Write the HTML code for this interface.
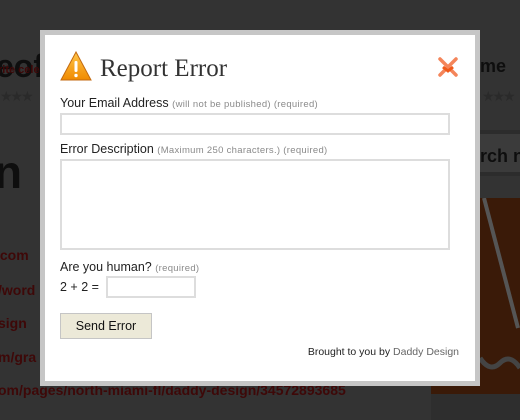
<!DOCTYPE html>
<html><head><meta charset="utf-8"><style>
*{margin:0;padding:0;box-sizing:border-box}
body{width:520px;height:420px;background:#333;position:relative;overflow:hidden;font-family:"Liberation Sans",Arial,sans-serif}
.bg{position:absolute;font-weight:bold;color:#0e0e0e;white-space:nowrap}
.red{color:#3e0808;font-size:14px;font-weight:bold;position:absolute;white-space:nowrap}
#modal{position:absolute;left:40px;top:30px;width:440px;height:356px;background:#c6c6c6;}
#inner{position:absolute;left:5px;top:5px;width:430px;height:346px;background:#fff}
.lbl{position:absolute;left:15px;font-size:12.5px;color:#222}
.lbl small{font-size:9.5px;color:#8a8a8a;letter-spacing:.3px}
.inp{position:absolute;border:2px solid #ddd;background:#fff}
</style></head><body>
<div class="bg" style="left:-4px;top:48px;font-size:32px">eof</div>
<div class="red" style="left:-2px;top:64px;font-size:11px">rite cele</div>
<div style="position:absolute;left:0;top:88px;width:40px;height:12px;color:#2a2a2a;font-size:14px;letter-spacing:-2px">★★★</div>
<div class="bg" style="left:-6px;top:145px;font-size:46px">n</div>
<div class="red" style="left:-4px;top:247px">.com</div>
<div class="red" style="left:-2px;top:282px">/word</div>
<div class="red" style="left:-2px;top:315px">sign</div>
<div class="red" style="left:-2px;top:349px">m/gra</div>
<div class="red" style="left:-2px;top:382px">om/pages/north-miami-fl/daddy-design/34572893685</div>
<div class="bg" style="left:480px;top:56px;font-size:18px">me</div>
<div style="position:absolute;left:482px;top:88px;color:#2a2a2a;font-size:14px;letter-spacing:-2px">★★★</div>
<div style="position:absolute;left:478px;top:130px;width:42px;height:46px;background:#3b3b3b;border-top:4px solid #2c2c2c;border-bottom:4px solid #2c2c2c"></div>
<div class="bg" style="left:480px;top:146px;font-size:18px">rch n</div>
<div style="position:absolute;left:431px;top:198px;width:89px;height:196px;background:#3a1a08"></div>
<svg style="position:absolute;left:480px;top:198px" width="40" height="196"><path d="M4 0 L38 130" stroke="#555" stroke-width="4" fill="none"/><path d="M0 160 Q10 175 20 165 Q30 155 40 170" stroke="#444" stroke-width="5" fill="none"/></svg>
<div style="position:absolute;left:431px;top:394px;width:89px;height:26px;background:#2e2e2e"></div>
<div id="modal"><div id="inner">
<svg style="position:absolute;left:15px;top:16px" width="32" height="30" viewBox="0 0 32 30"><defs><linearGradient id="g" x1="0" y1="0" x2="0" y2="1"><stop offset="0" stop-color="#ffc64a"/><stop offset="1" stop-color="#f08a00"/></linearGradient></defs><path d="M16 1 L31 29 L1 29 Z" fill="url(#g)" stroke="#c36a10" stroke-width="1"/><rect x="14.5" y="10" width="3" height="11" rx="1.2" fill="#fff"/><circle cx="16" cy="24.5" r="1.7" fill="#fff"/></svg>
<div style="position:absolute;left:55px;top:20px;font-family:'Liberation Serif',serif;font-size:25px;color:#333">Report Error</div>
<svg style="position:absolute;left:392px;top:22px" width="22" height="20" viewBox="0 0 22 20"><path d="M3 2 L19 18 M19 2 L3 18" stroke="#f4855a" stroke-width="3.5" stroke-linecap="round"/><path d="M6 10 L11 14 L16 10" stroke="#f05a1a" stroke-width="3" fill="none"/></svg>
<div class="lbl" style="top:61px">Your Email Address <small>(will not be published) (required)</small></div>
<div class="inp" style="left:15px;top:78px;width:390px;height:22px"></div>
<div class="lbl" style="top:107px">Error Description <small>(Maximum 250 characters.) (required)</small></div>
<div class="inp" style="left:15px;top:124px;width:390px;height:91px"></div>
<div class="lbl" style="top:225px">Are you human? <small>(required)</small></div>
<div class="lbl" style="top:245px">2 + 2 =</div>
<div class="inp" style="left:61px;top:241px;width:90px;height:22px"></div>
<div style="position:absolute;left:15px;top:278px;width:92px;height:26px;background:#ece9d8;border:1px solid #c5c5c5;font-size:12.5px;color:#111;text-align:center;line-height:24px">Send Error</div>
<div style="position:absolute;right:16px;top:311px;font-size:10.5px;color:#222">Brought to you by <span style="color:#666">Daddy Design</span></div>
</div></div>
</body></html>
